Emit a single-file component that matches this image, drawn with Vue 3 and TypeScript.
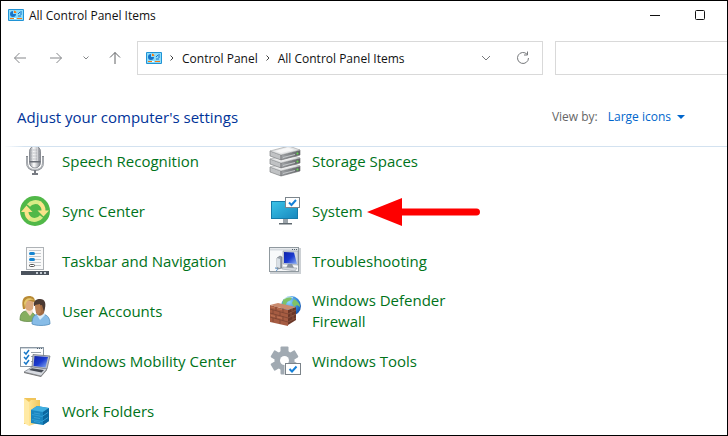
<script setup lang="ts">
import { ref } from 'vue'

type IconName =
  | 'speech' | 'sync' | 'taskbar' | 'users' | 'mobility' | 'folders'
  | 'storage' | 'system' | 'trouble' | 'firewall' | 'tools'

interface PanelItem {
  label: string
  icon: IconName
  highlighted?: boolean
}

const items: PanelItem[] = [
  { label: 'Speech Recognition', icon: 'speech' },
  { label: 'Sync Center', icon: 'sync' },
  { label: 'Taskbar and Navigation', icon: 'taskbar' },
  { label: 'User Accounts', icon: 'users' },
  { label: 'Windows Mobility Center', icon: 'mobility' },
  { label: 'Work Folders', icon: 'folders' },
  { label: 'Storage Spaces', icon: 'storage' },
  { label: 'System', icon: 'system', highlighted: true },
  { label: 'Troubleshooting', icon: 'trouble' },
  { label: 'Windows Defender Firewall', icon: 'firewall' },
  { label: 'Windows Tools', icon: 'tools' },
]

const view = ref('Large icons')
const search = ref('')
</script>

<template>
  <div class="window">
    <svg class="defs" width="0" height="0" aria-hidden="true">
      <defs>
        <linearGradient id="screen" x1="0" y1="0" x2="1" y2="1">
          <stop offset="0" stop-color="#1023a8" />
          <stop offset=".5" stop-color="#1b3ad0" />
          <stop offset="1" stop-color="#8fb4f2" />
        </linearGradient>
        <linearGradient id="metal" x1="0" x2="1">
          <stop offset="0" stop-color="#8d9198" />
          <stop offset=".4" stop-color="#ffffff" />
          <stop offset="1" stop-color="#7c8088" />
        </linearGradient>
        <linearGradient id="monitor" x1="0" y1="0" x2="1" y2="1">
          <stop offset="0" stop-color="#3cc4e8" />
          <stop offset="1" stop-color="#1787bd" />
        </linearGradient>
        <linearGradient id="disk" x1="0" x2="1">
          <stop offset="0" stop-color="#a2a5a8" />
          <stop offset="1" stop-color="#5e6164" />
        </linearGradient>
        <radialGradient id="globe" cx=".4" cy=".3" r=".8">
          <stop offset="0" stop-color="#8fd6fb" />
          <stop offset=".6" stop-color="#2b7fd6" />
          <stop offset="1" stop-color="#123f94" />
        </radialGradient>
        <linearGradient id="folder" x1="0" x2="1">
          <stop offset="0" stop-color="#ffe391" />
          <stop offset="1" stop-color="#f2c75c" />
        </linearGradient>
        <symbol id="panel" viewBox="0 0 16 12">
          <rect width="16" height="12" rx="1" fill="#2093d5" />
          <rect x="1" y="1" width="14" height="10" fill="#8bdcfa" />
          <path d="M5 2a3 3 0 1 0 3 3H5z" fill="#1673c8" />
          <path d="M6 1.500a3 3 0 0 1 2.500 2.500H6z" fill="#f47b16" />
          <path d="M10 5l2-2h2M10 7h3M12 5h2" stroke="#1673c8" fill="none" />
          <path d="M2 9.500h4" stroke="#f47b16" />
          <path d="M9 9.500h5" stroke="#f47b16" />
          <path d="M6 9.500h2" stroke="#fff" />
        </symbol>
      </defs>
    </svg>

    <header class="titlebar">
      <svg class="panel-icon" aria-hidden="true"><use href="#panel" /></svg>
      <h1 class="title">All Control Panel Items</h1>
      <button class="caption" type="button" aria-label="Minimize">
        <svg width="12" height="12"><path d="M1 6.500h10" stroke="#111" /></svg>
      </button>
      <button class="caption" type="button" aria-label="Maximize">
        <svg width="12" height="12"><rect x="1.500" y="1.500" width="9" height="9" rx="1" fill="none" stroke="#111" /></svg>
      </button>
    </header>

    <nav class="toolbar" aria-label="Navigation">
      <div class="history">
        <button type="button" aria-label="Back">
          <svg width="14" height="14"><path d="M13 7H1.500M6.500 2l-5 5 5 5" /></svg>
        </button>
        <button type="button" aria-label="Forward">
          <svg width="14" height="14"><path d="M1 7h11.500M7.500 2l5 5-5 5" /></svg>
        </button>
        <button class="recent" type="button" aria-label="Recent locations">
          <svg width="8" height="8"><path d="M1.500 2.500 4 5l2.500-2.500" /></svg>
        </button>
        <button class="up" type="button" aria-label="Up">
          <svg width="14" height="14"><path d="M7 13V1.500M2 6.500l5-5 5 5" /></svg>
        </button>
      </div>
      <div class="address">
        <svg class="panel-icon" aria-hidden="true"><use href="#panel" /></svg>
        <svg class="crumb-arrow" viewBox="0 0 6 8"><path d="M1.500 1.500 4 4 1.500 6.500" /></svg>
        <a href="#control-panel">Control Panel</a>
        <svg class="crumb-arrow" viewBox="0 0 6 8"><path d="M1.500 1.500 4 4 1.500 6.500" /></svg>
        <a href="#all-items">All Control Panel Items</a>
        <span class="spacer"></span>
        <button type="button" aria-label="Previous locations">
          <svg width="10" height="8"><path d="M1 2l4 4 4-4" /></svg>
        </button>
        <button class="refresh" type="button" aria-label="Refresh">
          <svg width="14" height="14"><path d="M11 3.200A5.500 5.500 0 1 0 12.500 7M11.500 .5v3.500H8" /></svg>
        </button>
      </div>
      <input v-model="search" class="search" type="search" aria-label="Search" />
    </nav>

    <section class="heading">
      <h2>Adjust your computer's settings</h2>
      <div class="view">
        <label for="view-by">View by:</label>
        <div class="picker">
          <select id="view-by" v-model="view">
            <option>Large icons</option>
          </select>
          <svg width="8" height="4" aria-hidden="true"><path d="M0 0h8L4 4z" fill="#0066cc" /></svg>
        </div>
      </div>
    </section>

    <main class="content">
      <ul class="items">
        <li v-for="item in items" :key="item.label">
          <a class="item" href="#item">
            <svg v-if="item.icon === 'speech'" class="icon" viewBox="0 0 32 32">
              <path d="M8 11v7c0 4 3 7 8 7s8-3 8-7v-7" fill="none" stroke="#85898f" stroke-width="2" />
              <path d="M8 12v6c0 4 3 6.500 8 6.500s8-2.500 8-6.500v-6" fill="none" stroke="#e0e2e5" stroke-width=".7" />
              <rect x="10.500" y="1" width="11" height="22" rx="5.500" fill="url(#metal)" stroke="#7b7f87" stroke-width=".8" />
              <path d="M11 5h10M11 8h10M11 11h10M11 14h10" stroke="#a6aab0" stroke-width=".7" />
              <path d="M13.500 2v14M16 1.500V16M18.500 2v14" stroke="#dcdee1" stroke-width=".7" />
              <path d="M10.500 16h11v1.500h-11z" fill="#6a6e76" />
              <path d="M15 25h2v3h2v2h-6v-2h2z" fill="#777b82" />
            </svg>
            <svg v-else-if="item.icon === 'sync'" class="icon" viewBox="0 0 32 32">
              <circle cx="16" cy="16" r="15" fill="#51b848" />
              <path d="M9.500 10.500A9 9 0 0 1 21.500 8.500" fill="none" stroke="#d9eb86" stroke-width="4" />
              <path d="M20.500 8A9 9 0 0 1 24.500 16" fill="none" stroke="#fbe38b" stroke-width="4" />
              <path d="M18.500 15.500h11.500l-5.500 6z" fill="#fbe38b" />
              <path d="M11.500 24A9 9 0 0 1 7.500 16" fill="none" stroke="#fbe38b" stroke-width="4" />
              <path d="M22.500 21.500A9 9 0 0 1 10.500 23.500" fill="none" stroke="#d9eb86" stroke-width="4" />
              <path d="M2 17h11.500L7.500 10.500z" fill="#fbe38b" />
            </svg>
            <svg v-else-if="item.icon === 'taskbar'" class="icon" viewBox="0 0 32 32">
              <rect x="7.500" y="2.500" width="17" height="22" fill="#fafafa" stroke="#aeb2b6" />
              <path d="M10 5.500h12M16 8.500h6M16 14.500h6M10 11.500h12M16 20.500h6M10 17.500h12" stroke="#c5c9cd" />
              <rect x="10" y="7" width="6" height="3" rx="1.500" fill="#1685d1" />
              <rect x="10" y="13" width="6" height="3" rx="1.500" fill="#1685d1" />
              <rect x="10.500" y="19.500" width="5" height="2" rx="1" fill="#fff" stroke="#555" />
              <rect x="2" y="26" width="28" height="4" fill="#4b535d" />
              <path d="M17 27h2v2h-2zM21 27h2v2h-2zM25 27h2v2h-2z" fill="#c3cad1" />
            </svg>
            <svg v-else-if="item.icon === 'users'" class="icon" viewBox="0 0 32 32">
              <path d="M1 25c0-6 2-9 7-9s9 3 9 9c-4 2-12 2-16 0z" fill="#86ae60" stroke="#5c8440" stroke-width=".7" />
              <path d="M7 16l4 5 3-4-1-3H8z" fill="#f3dcc5" />
              <path d="M5 6c0-4 8-5 10-1l-1 9c-3 3-6 2-8-1z" fill="#dba87d" />
              <path d="M4 14C2 4 5 1 10 1c4 0 6 2 6 6-4 0-7-3-9-1l-1 8z" fill="#b98b35" />
              <path d="M5 8c1-5 6-6 10-3-4-1-7 0-8 3l-1 5z" fill="#e6c86f" />
              <path d="M13 29c0-7 2-10 8-10 7 0 10 3 10 10-5 2-13 2-18 0z" fill="#87bce7" stroke="#4784b5" stroke-width=".7" />
              <path d="M18 20l3 5 5-5-1-3h-6z" fill="#d9edfb" />
              <path d="M16 9c0-5 9-6 10 1l-1 8c-3 4-6 3-8 0z" fill="#a26b43" />
              <path d="M15 11c-1-6 3-7 6-7 5 0 7 4 4 13l-2-7z" fill="#4b3a33" />
              <path d="M16 10l5-1 1 8-3 3-2-3z" fill="#b87e51" />
            </svg>
            <svg v-else-if="item.icon === 'mobility'" class="icon" viewBox="0 0 32 32">
              <rect x="1.500" y="2.500" width="23" height="19" fill="#fff" stroke="#8c98a3" />
              <path d="M2 3.500h22" stroke="#cfd6dc" />
              <path d="M18 3.500h1M20 3.500h1M22 3.500h1" stroke="#536475" />
              <path d="M5 7l2 2 3-4M5 12l2 2 3-4M5 17l2 2 3-4" fill="none" stroke="#1978c8" stroke-width="1.500" />
              <path d="M12 7.500h10M12 11.500h4M12 16.500h3" stroke="#98a2aa" />
              <path d="M14 9.500l17 1.500-3 13-15-2z" fill="#b9bec7" stroke="#666c77" stroke-width=".7" />
              <path d="M15.500 11l13.500 1-2.500 10.500-12-1.500z" fill="url(#screen)" />
              <path d="M13 22l15 2-6 7-17-4z" fill="#d7dae0" stroke="#777c85" stroke-width=".7" />
              <path d="M13 23.300l12 1.700-2.500 2.500L10 25z" fill="#454a54" />
              <path d="M5 27v1l17 4 6-7v-1l-6 7z" fill="#777" />
            </svg>
            <svg v-else-if="item.icon === 'folders'" class="icon" viewBox="0 0 32 32">
              <path d="M5 3h12v3h4v23H5z" fill="#f0c45a" />
              <path d="M5 3l5 4v24l-5-3z" fill="#ffeaa5" />
              <path d="M10 7l2-2h9v22l-11 4z" fill="url(#folder)" />
              <path d="M12 15l6-4 12 2v13l-6 4-12-2z" fill="#1a86c0" />
              <path d="M12 15l6-4 12 2-6 4z" fill="#3faee0" />
              <path d="M24 17l6-4v13l-6 4z" fill="#0c679f" />
              <path d="M13 19.500l10 2 6-4M13 24.500l10 2 6-4" stroke="#2f9fd6" fill="none" />
              <path d="M15 18l6 1M15 22.500l6 1M15 26.500l6 1" stroke="#4fb0dd" stroke-width=".6" />
            </svg>
            <svg v-else-if="item.icon === 'storage'" class="icon" viewBox="0 0 32 32">
              <g v-for="y in [16, 8, 0]" :key="y" :transform="`translate(0 ${y})`">
                <path d="M1 6l11 4v5L1 11z" fill="#c0c2c4" stroke="#707376" stroke-width=".6" />
                <path d="M12 10l19-5v5l-19 5z" fill="url(#disk)" stroke="#64676a" stroke-width=".6" />
                <path d="M1 6l19-5 11 4-19 5z" fill="#e5e6e7" stroke="#999c9e" stroke-width=".6" />
                <path d="M6 6l13-3.500 6 2.500-13 3z" fill="#f7f7f7" />
                <path d="M14 12.500l12-3" stroke="#c4c7c9" />
                <circle cx="28.500" cy="8.500" r="1" fill="#62dc4b" />
              </g>
            </svg>
            <svg v-else-if="item.icon === 'system'" class="icon" viewBox="0 0 32 32">
              <path d="M14 23h5v5h-5z" fill="#9ca4aa" />
              <path d="M10 28h13v1.500H10z" fill="#5e686f" />
              <rect x="2.500" y="6.500" width="26" height="17" fill="url(#monitor)" stroke="#167ba9" />
              <rect x="16.500" y="2.500" width="14" height="10" fill="#fff" stroke="#7c858c" />
              <path d="M20 7.500l2.500 2.500L27 5" fill="none" stroke="#1580d8" stroke-width="2" />
            </svg>
            <svg v-else-if="item.icon === 'trouble'" class="icon" viewBox="0 0 32 32">
              <rect x="1" y="3" width="31" height="26" fill="#ccd0d4" />
              <rect x=".5" y="2.500" width="29" height="24" fill="#f8f9fa" stroke="#90999f" />
              <path d="M1 4.500h28" stroke="#d6dbe0" stroke-width="2" />
              <path d="M23 4.500h1M25 4.500h1M27 4.500h1" stroke="#53606a" />
              <path d="M8 13l3-2 2 1v11l-4 1-1-1z" fill="#9ca4ad" stroke="#59616b" stroke-width=".5" />
              <path d="M8 13l3 1v9l-3-1z" fill="#dae0e6" />
              <path d="M14 6h15v14l-15-1z" fill="#d2d8df" stroke="#818b97" stroke-width=".5" />
              <path d="M15 7l10 .5 3 11.500-13-1z" fill="url(#screen)" />
              <path d="M19 19h4l2 4h-8z" fill="#89939e" />
              <path d="M14 22l14 1-2 3-13-2z" fill="#d4d9df" stroke="#8d949c" stroke-width=".5" />
              <path d="M6 23c3 0 3 2 1 3" fill="none" stroke="#4984be" />
            </svg>
            <svg v-else-if="item.icon === 'firewall'" class="icon" viewBox="0 0 32 32">
              <circle cx="22" cy="11" r="10" fill="url(#globe)" />
              <path d="M14 5c3-3 7-3 9-3l-1 3-4 2-2 5-3-1zM25 4c4 2 6 5 6 8l-3-2-3 2-2-4zM20 13l6 1 1 3-3 3z" fill="#7fc267" />
              <path d="M15 4c3-2 6-3 9-1" stroke="#e9faff" fill="none" opacity=".8" />
              <path d="M19 15l8-3v13l-8 5z" fill="#6b3728" />
              <path d="M1 10l18 5v16L1 27z" fill="#a65c42" />
              <path d="M1 10l8-2 18 4-8 3z" fill="#ca8b6e" />
              <path d="M1 14l18 5M1 18l18 5M1 22l18 5M7 11.500v4M14 13.500v4M4 15v4M11 17v4M7 20v4M14 21.500v4M4 23v4M11 25v4" stroke="#75402f" stroke-width=".7" />
              <path d="M19 19l8-4M19 23l8-4M19 27l8-4M23 13v3M22 17v4M24 20v4" stroke="#9b6651" stroke-width=".6" />
              <path d="M2 12l4 1M8 13.500l5 1.200M2 20.500l4 1M8 22l5 1.200" stroke="#bd7353" />
            </svg>
            <svg v-else class="icon" viewBox="0 0 32 32">
              <g fill="#a1aab2">
                <rect v-for="angle in [0, 60, 120]" :key="angle" x="11.500" y="1.500" width="8" height="28" rx="1" :transform="`rotate(${angle} 15.500 15.500)`" />
                <circle cx="15.500" cy="15.500" r="10" />
              </g>
              <circle cx="15.500" cy="15.500" r="4.500" fill="#fff" />
              <rect x="15.500" y="18" width="16.500" height="12.500" fill="#fff" />
              <rect x="16.500" y="18.500" width="15" height="11" fill="#fff" stroke="#7b8389" />
              <path d="M20.500 24l2.500 2.500 4.500-5" fill="none" stroke="#1580d8" stroke-width="2" />
            </svg>
            <span class="label">{{ item.label }}</span>
          </a>
          <svg v-if="item.highlighted" class="pointer" viewBox="0 0 113 28" aria-hidden="true">
            <path d="M0 14 35 0v10.500h74.500a3.500 3.500 0 0 1 0 7H35V28z" fill="#fe0000" />
          </svg>
        </li>
      </ul>
    </main>
  </div>
</template>

<style>
body {
  background: #fff;
}
</style>

<style scoped>
.window {
  box-sizing: border-box;
  display: flex;
  flex-direction: column;
  height: 100vh;
  overflow: hidden;
  border: 1px solid #000;
  background: #fff;
  color: #111;
  font-family: "Open Sans", "Noto Sans", sans-serif;
  font-size: 12px;
}

.defs {
  position: absolute;
}

button {
  display: flex;
  align-items: center;
  justify-content: center;
  flex: none;
  padding: 0;
  border: 0;
  background: none;
}

a {
  color: inherit;
  text-decoration: none;
}

.titlebar {
  display: flex;
  align-items: center;
  flex: none;
  height: 28px;
  padding: 0 5px 0 7px;
}

.panel-icon {
  flex: none;
  width: 16px;
  height: 12px;
}

.title {
  flex: 1;
  margin: 0 0 0 5px;
  font-size: 12px;
  font-weight: 400;
}

.caption {
  width: 45px;
  height: 28px;
}

.toolbar {
  display: flex;
  flex: none;
  height: 34px;
  margin-top: 12px;
}

.history {
  box-sizing: border-box;
  display: flex;
  align-items: center;
  flex: none;
  width: 136px;
  padding-left: 1px;
}

.history button {
  width: 36px;
  height: 32px;
}

.history .recent {
  width: 24px;
}

.history .up {
  width: 34px;
}

.toolbar path {
  fill: none;
  stroke: #77797c;
  stroke-width: 1px;
}

.history path {
  stroke: #85878a;
}

.history .up path {
  stroke: #606265;
}

.address {
  box-sizing: border-box;
  display: flex;
  align-items: center;
  flex: 1;
  min-width: 0;
  padding: 0 1px 0 8px;
  border: 1px solid #d9d9d9;
  white-space: nowrap;
}

.crumb-arrow {
  flex: none;
  width: 6px;
  height: 8px;
  margin: 0 7px;
}

.address .crumb-arrow path {
  stroke: #444;
}

.spacer {
  flex: 1;
}

.address button {
  width: 37px;
  height: 32px;
}

.search {
  box-sizing: border-box;
  flex: none;
  width: 172px;
  margin: 0 0 0 12px;
  padding: 0 10px;
  border: 1px solid #d9d9d9;
  border-right: 0;
  border-radius: 0;
  outline: 0;
  background: #fff;
  font: inherit;
}

.heading {
  display: flex;
  align-items: center;
  justify-content: space-between;
  flex: none;
  height: 71px;
  box-sizing: border-box;
  padding: 12px 42px 0 16px;
}

.heading h2 {
  margin: 0;
  color: #003399;
  font-size: 15px;
  font-weight: 400;
}

.view,
.picker {
  display: flex;
  align-items: center;
}

.view {
  gap: 10px;
  color: #666;
}

.picker {
  gap: 6px;
}

.picker select {
  appearance: none;
  field-sizing: content;
  padding: 0;
  border: 0;
  background: none;
  color: #0066cc;
  font: inherit;
}

.content {
  flex: 1;
  min-height: 0;
  margin-left: 4px;
  border-top: 1px solid;
  border-image: linear-gradient(90deg, #fff, #d3e2f0 20px) 1;
  overflow: hidden;
}

.items {
  display: grid;
  grid-auto-flow: column;
  grid-template-rows: repeat(6, 50px);
  grid-auto-columns: 250px;
  margin: -11px 0 0;
  padding: 0 0 0 14px;
  list-style: none;
}

.items li {
  position: relative;
}

.item {
  display: flex;
  align-items: center;
  gap: 11px;
  height: 50px;
  color: #00731a;
  font-size: 15px;
  line-height: 21px;
}

.icon {
  flex: none;
  width: 32px;
  height: 32px;
}

.label {
  max-width: 190px;
}

.pointer {
  position: absolute;
  top: 12px;
  left: 98px;
  width: 113px;
  height: 28px;
}
</style>
